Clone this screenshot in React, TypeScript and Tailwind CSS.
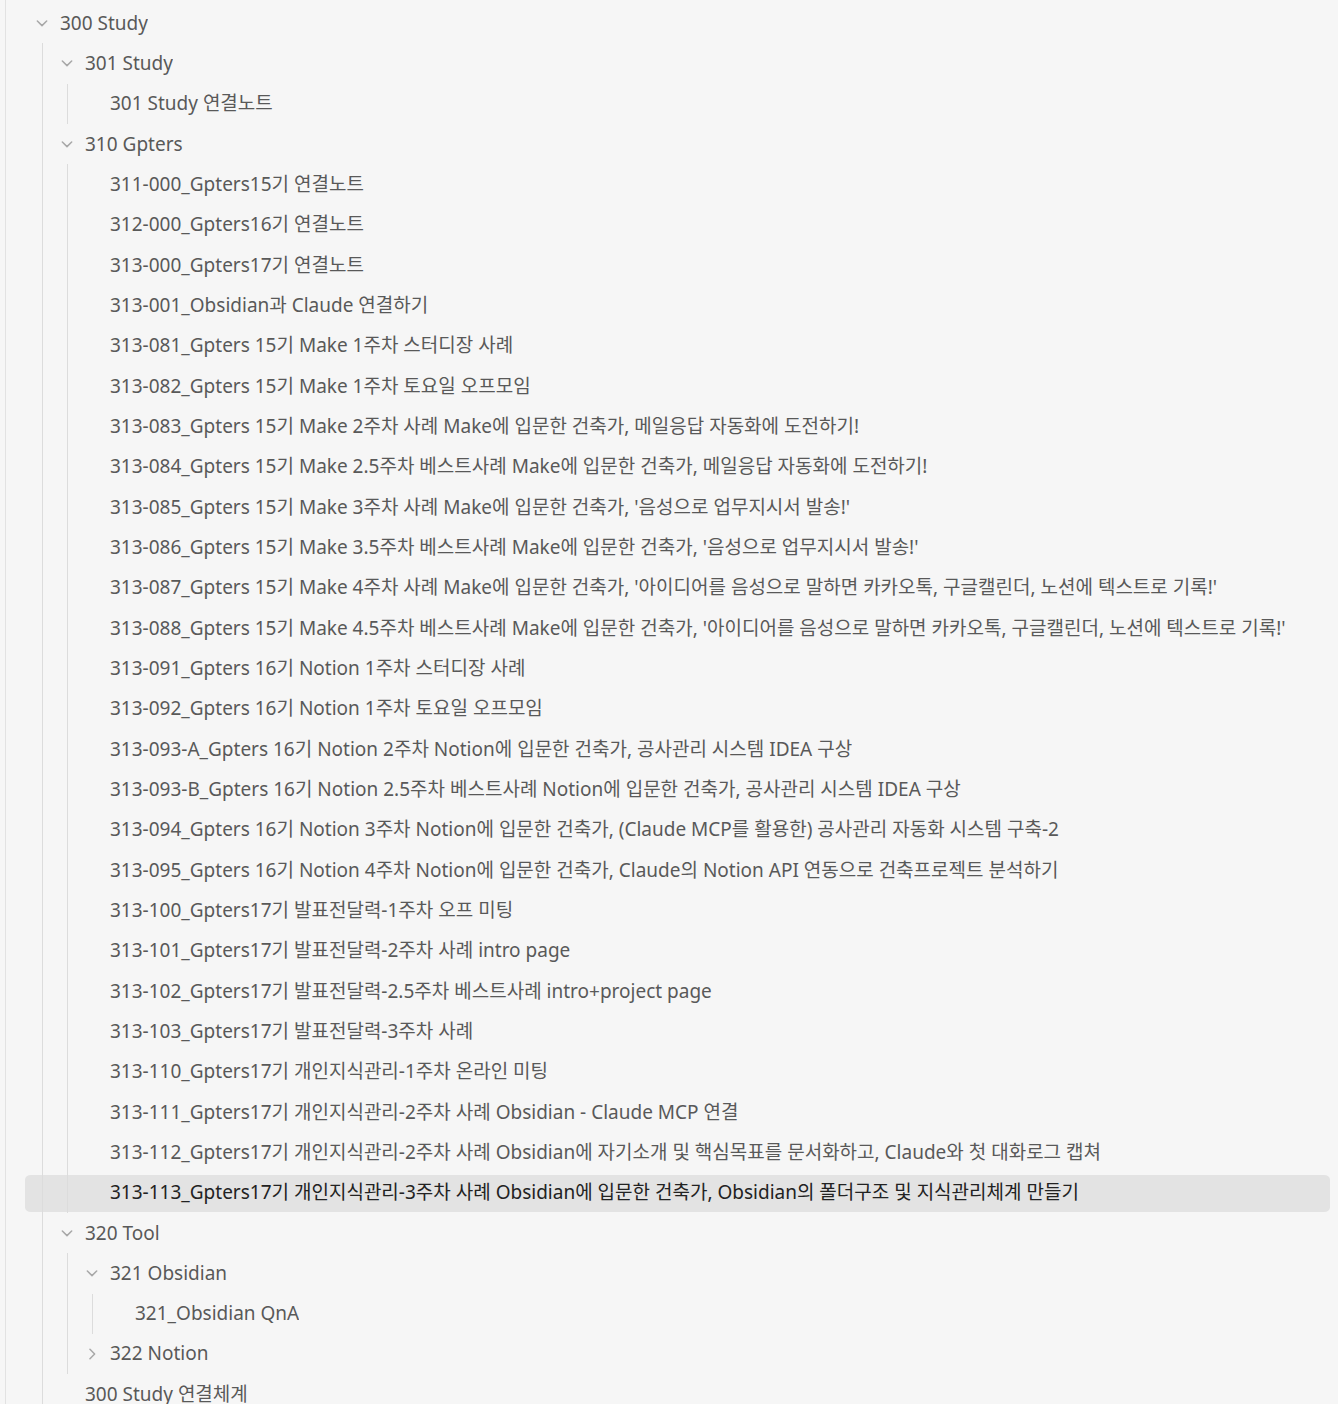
import React from 'react';

type Row = { label: string; depth: number; folder?: 'open' | 'closed'; active?: boolean };

const ROWS: Row[] = [
  { label: '300 Study', depth: 0, folder: 'open' },
  { label: '301 Study', depth: 1, folder: 'open' },
  { label: '301 Study 연결노트', depth: 2 },
  { label: '310 Gpters', depth: 1, folder: 'open' },
  ...[
    '311-000_Gpters15기 연결노트',
    '312-000_Gpters16기 연결노트',
    '313-000_Gpters17기 연결노트',
    '313-001_Obsidian과 Claude 연결하기',
    '313-081_Gpters 15기 Make 1주차 스터디장 사례',
    '313-082_Gpters 15기 Make 1주차 토요일 오프모임',
    '313-083_Gpters 15기 Make 2주차 사례 Make에 입문한 건축가, 메일응답 자동화에 도전하기!',
    '313-084_Gpters 15기 Make 2.5주차 베스트사례 Make에 입문한 건축가, 메일응답 자동화에 도전하기!',
    "313-085_Gpters 15기 Make 3주차 사례 Make에 입문한 건축가, '음성으로 업무지시서 발송!'",
    "313-086_Gpters 15기 Make 3.5주차 베스트사례 Make에 입문한 건축가, '음성으로 업무지시서 발송!'",
    "313-087_Gpters 15기 Make 4주차 사례 Make에 입문한 건축가, '아이디어를 음성으로 말하면 카카오톡, 구글캘린더, 노션에 텍스트로 기록!'",
    "313-088_Gpters 15기 Make 4.5주차 베스트사례 Make에 입문한 건축가, '아이디어를 음성으로 말하면 카카오톡, 구글캘린더, 노션에 텍스트로 기록!'",
    '313-091_Gpters 16기 Notion 1주차 스터디장 사례',
    '313-092_Gpters 16기 Notion 1주차 토요일 오프모임',
    '313-093-A_Gpters 16기 Notion 2주차 Notion에 입문한 건축가, 공사관리 시스템 IDEA 구상',
    '313-093-B_Gpters 16기 Notion 2.5주차 베스트사례 Notion에 입문한 건축가, 공사관리 시스템 IDEA 구상',
    '313-094_Gpters 16기 Notion 3주차 Notion에 입문한 건축가, (Claude MCP를 활용한) 공사관리 자동화 시스템 구축-2',
    '313-095_Gpters 16기 Notion 4주차 Notion에 입문한 건축가, Claude의 Notion API 연동으로 건축프로젝트 분석하기',
    '313-100_Gpters17기 발표전달력-1주차 오프 미팅',
    '313-101_Gpters17기 발표전달력-2주차 사례 intro page',
    '313-102_Gpters17기 발표전달력-2.5주차 베스트사례 intro+project page',
    '313-103_Gpters17기 발표전달력-3주차 사례',
    '313-110_Gpters17기 개인지식관리-1주차 온라인 미팅',
    '313-111_Gpters17기 개인지식관리-2주차 사례 Obsidian - Claude MCP 연결',
    '313-112_Gpters17기 개인지식관리-2주차 사례 Obsidian에 자기소개 및 핵심목표를 문서화하고, Claude와 첫 대화로그 캡쳐',
  ].map((label) => ({ label, depth: 2 })),
  {
    label: '313-113_Gpters17기 개인지식관리-3주차 사례 Obsidian에 입문한 건축가, Obsidian의 폴더구조 및 지식관리체계 만들기',
    depth: 2,
    active: true,
  },
  { label: '320 Tool', depth: 1, folder: 'open' },
  { label: '321 Obsidian', depth: 2, folder: 'open' },
  { label: '321_Obsidian QnA', depth: 3 },
  { label: '322 Notion', depth: 2, folder: 'closed' },
  { label: '300 Study 연결체계', depth: 1 },
];

function Chevron({ open }: { open: boolean }) {
  return (
    <svg width="14" height="14" viewBox="0 0 24 24" fill="none" stroke="#a8a8a8" strokeWidth="2.6" strokeLinecap="round" strokeLinejoin="round" className={open ? '' : '-rotate-90'}>
      <path d="M4 8.5 12 16.5 20 8.5" />
    </svg>
  );
}

function TreeRow({ row }: { row: Row }) {
  return (
    <div
      className={`flex h-[40.33px] items-stretch rounded-md py-[1.5px] bg-clip-content ${row.active ? 'bg-[#e3e3e3] text-[#222222]' : 'text-[#595959]'}`}
    >
      <div className="w-[8px] shrink-0" />
      {Array.from({ length: row.depth }).map((_, i) => (
        <div key={i} className="-my-[1.5px] w-[25px] shrink-0 pl-[9px]">
          <div className="h-full border-l border-[#dcdcdc]" />
        </div>
      ))}
      {row.folder ? (
        <div className="flex w-[18px] shrink-0 items-center justify-center">
          <Chevron open={row.folder === 'open'} />
        </div>
      ) : (
        <div className="w-[18px] shrink-0" />
      )}
      <div className="ml-[9px] flex items-center overflow-hidden whitespace-nowrap">{row.label}</div>
    </div>
  );
}

export default function App() {
  return (
    <div
      className="min-h-[1404px] bg-[#f6f6f6] pl-[5px] text-[19px] leading-none"
      style={{ fontFamily: '"Noto Sans", "Noto Sans CJK KR", sans-serif' }}
    >
      <div className="min-h-[1404px] border-l border-[#e2e2e2] pl-[19px] pr-[8px] pt-[3px]">
        {ROWS.map((row, i) => (
          <TreeRow key={i} row={row} />
        ))}
      </div>
    </div>
  );
}
